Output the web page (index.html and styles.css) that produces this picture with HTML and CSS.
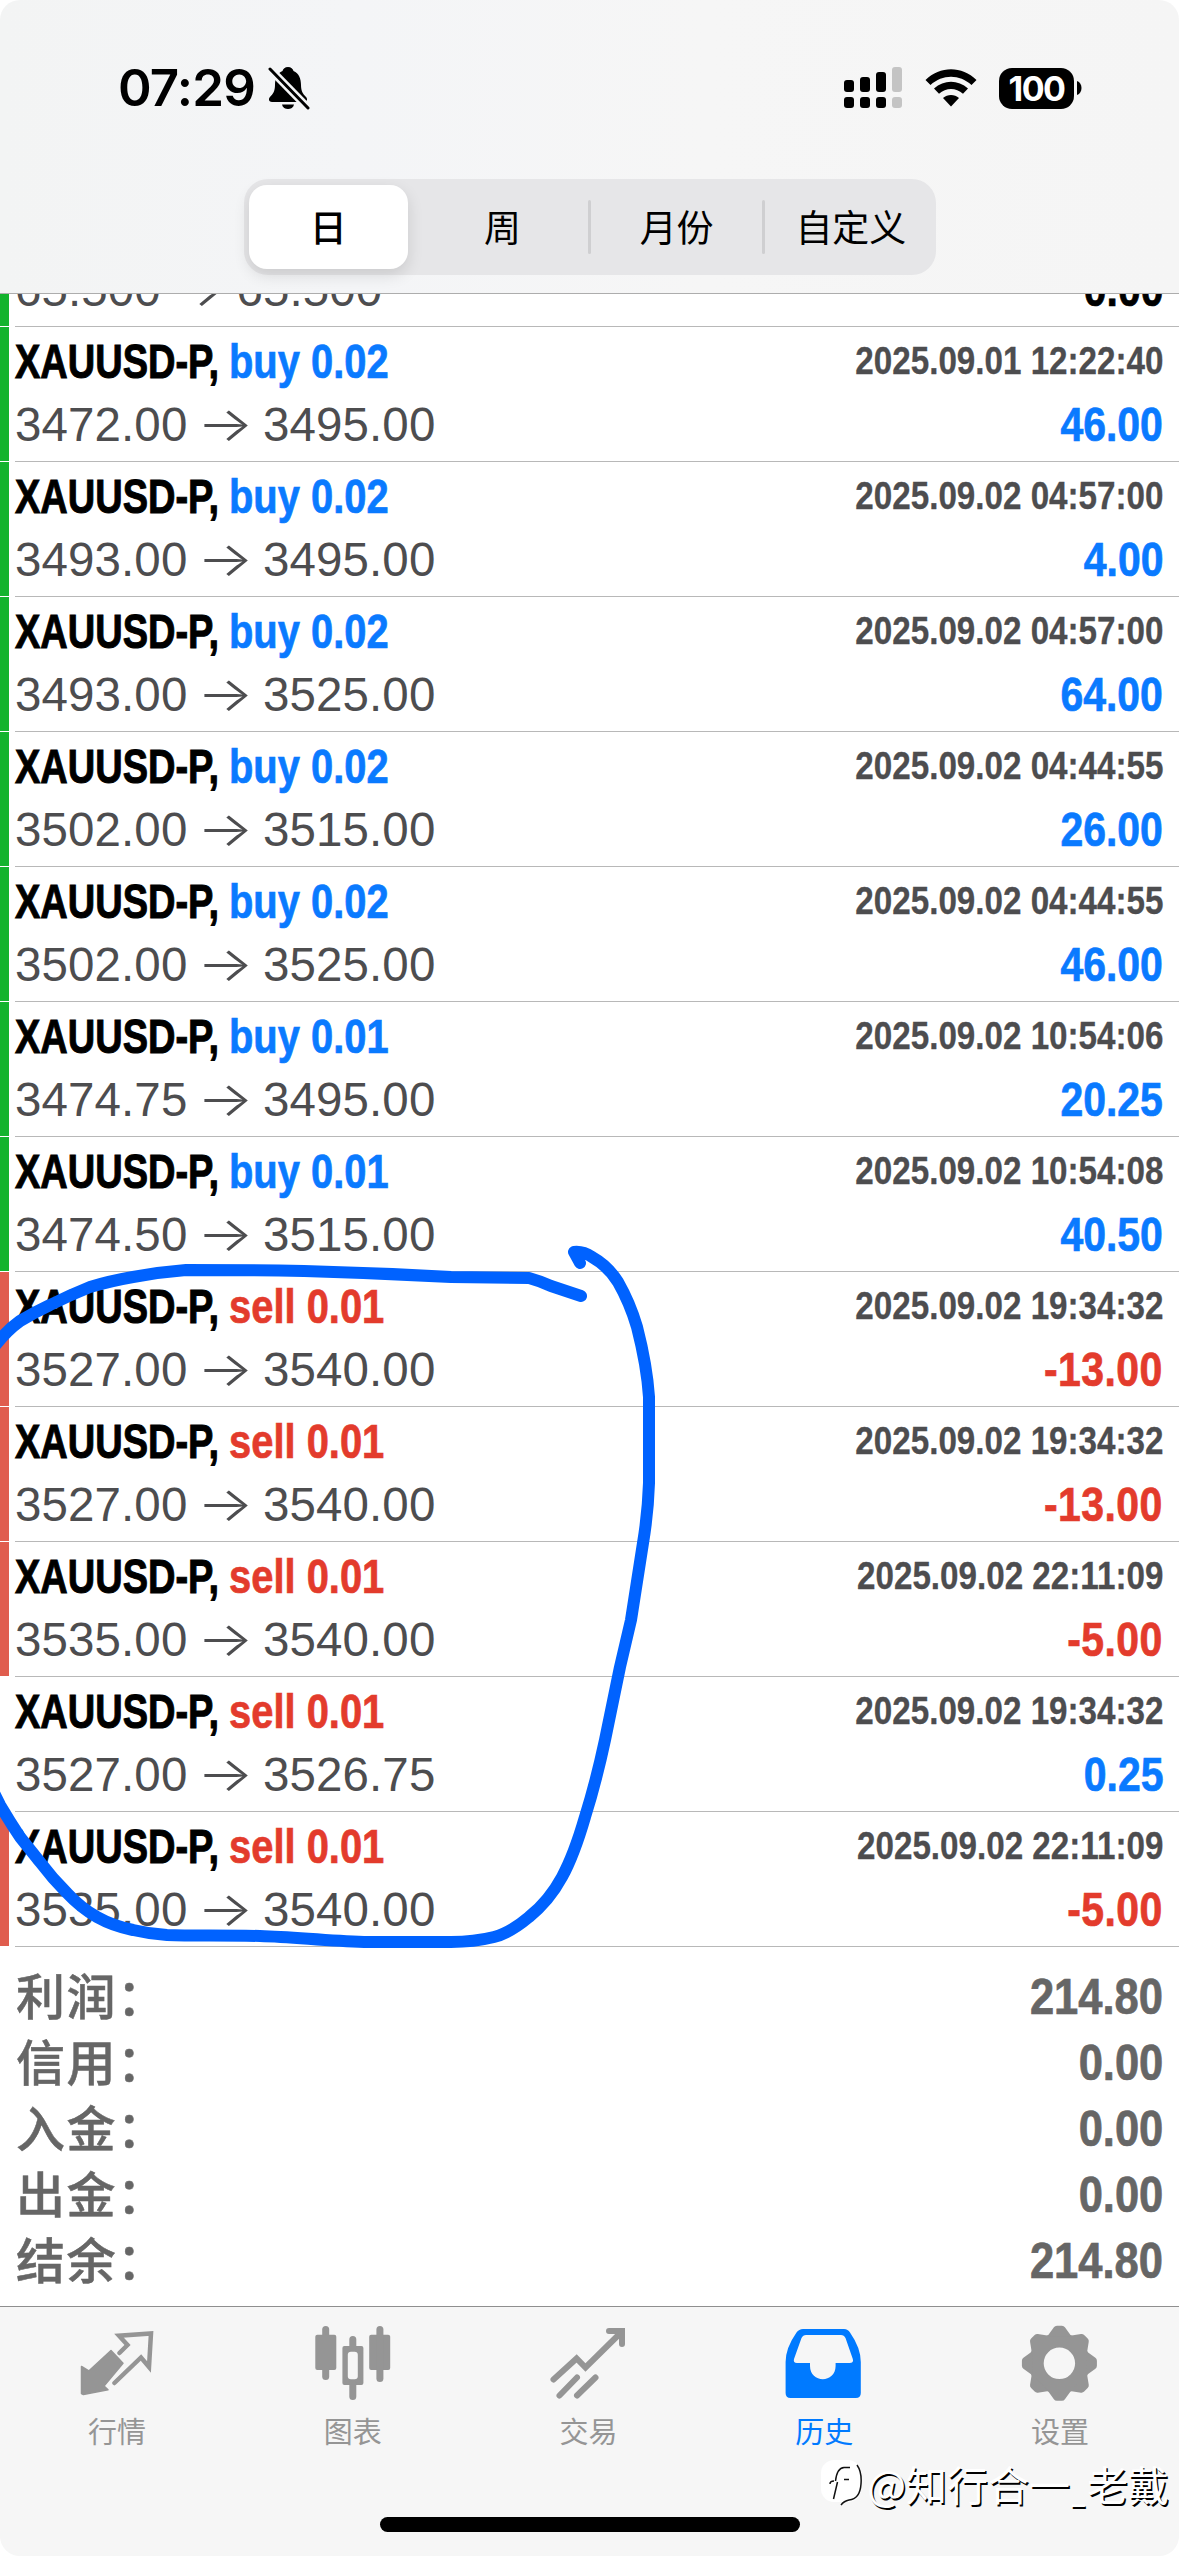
FILE: index.html
```html
<!DOCTYPE html>
<html lang="zh-CN">
<head>
    <meta charset="UTF-8">
    <meta name="viewport" content="width=device-width, initial-scale=1.0">
    <title>历史</title>
    <link rel="stylesheet" href="styles.css">
</head>
<body>
    <div class="screen">
        <header class="header">
            <div class="status-bar">
                <div class="status-left">
                    <span class="clock">07:29</span>
                    <svg class="bell" viewBox="0 0 42 44" width="42" height="44">
                        <path d="M20 1c-3 0-5 2-5.500 4C9 7 7 13 7 19c0 6-2 9-5 12-2 2-1 5 2 5h32c3 0 4-3 2-5-3-3-5-6-5-12 0-6-2-12-7.500-14C25 3 23 1 20 1z"/>
                        <path d="M14 38.500h12c-1 6-11 6-12 0z"/>
                        <path class="bell-gap" d="M2 3l38 39"/>
                        <path class="bell-slash" d="M2 3l38 39"/>
                    </svg>
                </div>
                <div class="status-right">
                    <svg viewBox="0 0 60 42" width="60" height="42">
                        <rect x="0" y="13" width="10" height="12" rx="3"/>
                        <rect x="16" y="10" width="10" height="15" rx="3"/>
                        <rect x="32" y="5" width="10" height="20" rx="3"/>
                        <rect class="dim" x="48" y="0" width="10" height="25" rx="3"/>
                        <rect x="0" y="30" width="10" height="11" rx="3"/>
                        <rect x="16" y="30" width="10" height="11" rx="3"/>
                        <rect x="32" y="30" width="10" height="11" rx="3"/>
                        <rect class="dim" x="48" y="30" width="10" height="11" rx="3"/>
                    </svg>
                    <svg class="wifi" viewBox="0 0 52 38" width="52" height="38">
                        <path d="M0.500 11C15-3.500 37-3.500 51.500 11L46.500 16C34.500 5 17.500 5 5.500 16z"/>
                        <path d="M9 19.500C19 10.500 33 10.500 43 19.500L38 24.800C31 18.500 21 18.500 14 24.800z"/>
                        <path d="M18 29C22.500 25 29.500 25 34 29L26 37.500z"/>
                    </svg>
                    <div class="battery"><span>100</span></div>
                    <svg class="battery-cap" viewBox="0 0 5 14" width="5" height="14"><path d="M0 0c6 2 6 12 0 14z"/></svg>
                </div>
            </div>
            <nav class="segments">
                <div class="segment active">日</div>
                <div class="segment">周</div>
                <div class="segment divided">月份</div>
                <div class="segment divided">自定义</div>
            </nav>
        </header>

        <main class="history">
            <div class="deal green">
                <div class="bar"></div>
                <div class="info">
                    <div class="line"></div>
                    <div class="line"><span class="price">65.500 <i>→</i> 65.500</span><span class="profit zero">0.00</span></div>
                </div>
            </div>
            <div class="deal green">
                <div class="bar"></div>
                <div class="info">
                    <div class="line"><span class="symbol">XAUUSD-P,</span><span class="side buy">buy 0.02</span><span class="date">2025.09.01 12:22:40</span></div>
                    <div class="line"><span class="price">3472.00 <i>→</i> 3495.00</span><span class="profit buy">46.00</span></div>
                </div>
            </div>
            <div class="deal green">
                <div class="bar"></div>
                <div class="info">
                    <div class="line"><span class="symbol">XAUUSD-P,</span><span class="side buy">buy 0.02</span><span class="date">2025.09.02 04:57:00</span></div>
                    <div class="line"><span class="price">3493.00 <i>→</i> 3495.00</span><span class="profit buy">4.00</span></div>
                </div>
            </div>
            <div class="deal green">
                <div class="bar"></div>
                <div class="info">
                    <div class="line"><span class="symbol">XAUUSD-P,</span><span class="side buy">buy 0.02</span><span class="date">2025.09.02 04:57:00</span></div>
                    <div class="line"><span class="price">3493.00 <i>→</i> 3525.00</span><span class="profit buy">64.00</span></div>
                </div>
            </div>
            <div class="deal green">
                <div class="bar"></div>
                <div class="info">
                    <div class="line"><span class="symbol">XAUUSD-P,</span><span class="side buy">buy 0.02</span><span class="date">2025.09.02 04:44:55</span></div>
                    <div class="line"><span class="price">3502.00 <i>→</i> 3515.00</span><span class="profit buy">26.00</span></div>
                </div>
            </div>
            <div class="deal green">
                <div class="bar"></div>
                <div class="info">
                    <div class="line"><span class="symbol">XAUUSD-P,</span><span class="side buy">buy 0.02</span><span class="date">2025.09.02 04:44:55</span></div>
                    <div class="line"><span class="price">3502.00 <i>→</i> 3525.00</span><span class="profit buy">46.00</span></div>
                </div>
            </div>
            <div class="deal green">
                <div class="bar"></div>
                <div class="info">
                    <div class="line"><span class="symbol">XAUUSD-P,</span><span class="side buy">buy 0.01</span><span class="date">2025.09.02 10:54:06</span></div>
                    <div class="line"><span class="price">3474.75 <i>→</i> 3495.00</span><span class="profit buy">20.25</span></div>
                </div>
            </div>
            <div class="deal green">
                <div class="bar"></div>
                <div class="info">
                    <div class="line"><span class="symbol">XAUUSD-P,</span><span class="side buy">buy 0.01</span><span class="date">2025.09.02 10:54:08</span></div>
                    <div class="line"><span class="price">3474.50 <i>→</i> 3515.00</span><span class="profit buy">40.50</span></div>
                </div>
            </div>
            <div class="deal red">
                <div class="bar"></div>
                <div class="info">
                    <div class="line"><span class="symbol">XAUUSD-P,</span><span class="side sell">sell 0.01</span><span class="date">2025.09.02 19:34:32</span></div>
                    <div class="line"><span class="price">3527.00 <i>→</i> 3540.00</span><span class="profit sell">-13.00</span></div>
                </div>
            </div>
            <div class="deal red">
                <div class="bar"></div>
                <div class="info">
                    <div class="line"><span class="symbol">XAUUSD-P,</span><span class="side sell">sell 0.01</span><span class="date">2025.09.02 19:34:32</span></div>
                    <div class="line"><span class="price">3527.00 <i>→</i> 3540.00</span><span class="profit sell">-13.00</span></div>
                </div>
            </div>
            <div class="deal red">
                <div class="bar"></div>
                <div class="info">
                    <div class="line"><span class="symbol">XAUUSD-P,</span><span class="side sell">sell 0.01</span><span class="date">2025.09.02 22:11:09</span></div>
                    <div class="line"><span class="price">3535.00 <i>→</i> 3540.00</span><span class="profit sell">-5.00</span></div>
                </div>
            </div>
            <div class="deal">
                <div class="bar"></div>
                <div class="info">
                    <div class="line"><span class="symbol">XAUUSD-P,</span><span class="side sell">sell 0.01</span><span class="date">2025.09.02 19:34:32</span></div>
                    <div class="line"><span class="price">3527.00 <i>→</i> 3526.75</span><span class="profit buy">0.25</span></div>
                </div>
            </div>
            <div class="deal red">
                <div class="bar"></div>
                <div class="info">
                    <div class="line"><span class="symbol">XAUUSD-P,</span><span class="side sell">sell 0.01</span><span class="date">2025.09.02 22:11:09</span></div>
                    <div class="line"><span class="price">3535.00 <i>→</i> 3540.00</span><span class="profit sell">-5.00</span></div>
                </div>
            </div>
        </main>

        <section class="summary">
            <div class="total"><span>利润：</span><b>214.80</b></div>
            <div class="total"><span>信用：</span><b>0.00</b></div>
            <div class="total"><span>入金：</span><b>0.00</b></div>
            <div class="total"><span>出金：</span><b>0.00</b></div>
            <div class="total"><span>结余：</span><b>214.80</b></div>
        </section>

        <footer class="footer">
            <nav class="tabs">
                <div class="tab">
                    <svg viewBox="0 0 84 84">
                        <path d="M35 29.500L47 42.300L28 65L32 68.700L7.400 73.500L5.500 72.500V45.500L12.800 50z" stroke="currentColor" stroke-width="1.500" stroke-linejoin="round"/>
                        <path class="stroke thin" d="M43.400 32L51.500 24L43 14.700L75 12.500L73 46L65 36.500L38.400 62"/>
                    </svg>
                    <span>行情</span>
                </div>
                <div class="tab">
                    <svg viewBox="0 0 84 84">
                        <rect x="3.300" y="13.700" width="21" height="35.300" rx="2"/>
                        <rect x="10.200" y="5" width="7" height="54" rx="3.500"/>
                        <path fill-rule="evenodd" d="M32.400 25h17q2 0 2 2v35q0 2-2 2h-17q-2 0-2-2V27q0-2 2-2zM39 30.700q-3.200 0-3.200 3v21.600q0 3 3.200 3h3.600q3.200 0 3.200-3V33.700q0-3-3.200-3z"/>
                        <path class="stroke wick" d="M40.800 18.500V26M40.800 63V75.500"/>
                        <rect x="57.200" y="13.700" width="21" height="35.300" rx="2"/>
                        <rect x="64.400" y="5" width="7" height="56" rx="3.500"/>
                    </svg>
                    <span>图表</span>
                </div>
                <div class="tab">
                    <svg viewBox="0 0 84 84">
                        <path class="stroke" d="M6.500 58.500L29.600 37.500L38.500 46.500L74.500 11"/>
                        <path class="stroke" d="M12.500 74.500L30 56.500M30 74.500L48.500 56.500"/>
                        <path d="M62 7h16v16q0 3-3 3t-3-3v-10h-10q-3 0-3-3t3-3z"/>
                    </svg>
                    <span>交易</span>
                </div>
                <div class="tab current">
                    <svg viewBox="0 0 84 84">
                        <path fill-rule="evenodd" d="M20 8H61Q65 8 67 11.500Q77.800 27 77.800 41V72Q77.800 77 72.800 77H7.600Q2.600 77 2.600 72V41Q2.600 27 13.500 11.500Q16 8 20 8zM23 14Q20 14 18.500 17L11 38Q10 42 14 42H27V45C27 62.500 52.600 62.500 52.600 45V42H66.500Q71 42 69.800 38L62.500 17Q61 14 58 14z"/>
                    </svg>
                    <span>历史</span>
                </div>
                <div class="tab">
                    <svg viewBox="0 0 84 84">
                        <g transform="translate(40.400 42.300)">
                            <circle class="ring" r="23"/>
                            <g id="teeth">
                                <path id="tooth" d="M-12-27L-5.500-36Q-4.500-37.500-2.500-37.500H2.500Q4.500-37.500 5.500-36L12-27z"/>
                                <use href="#tooth" transform="rotate(45)"/>
                                <use href="#tooth" transform="rotate(90)"/>
                                <use href="#tooth" transform="rotate(135)"/>
                            </g>
                            <use href="#teeth" transform="rotate(180)"/>
                        </g>
                    </svg>
                    <span>设置</span>
                </div>
            </nav>
            <div class="home-indicator"></div>
        </footer>

        <div class="watermark">
            <svg viewBox="0 0 42 50" width="42" height="50">
                <rect x="1" y="2" width="40" height="42" rx="13"/>
                <path d="M13.500 41L17.500 24M10 26q0-3 4-3M15.500 23Q17 10 24 9.500H30M24 21.500h5M37 7Q42 14 41 26Q40 41 29 42Q24 43 21 47"/>
            </svg>
            <span>@知行合一<em>_</em>老戴</span>
        </div>

        <!-- hand-drawn marker around the sell deals -->
        <svg class="marker" viewBox="0 0 1179 2556">
            <path d="M-6 1347Q6 1331 20 1321Q35 1312 50 1305Q70 1295 90 1287Q110 1281 133 1277Q160 1272 186 1270Q245 1270 304 1271Q378 1273 451 1277L529 1278Q540 1281 551 1286L581 1296"/>
            <path d="M580 1263L574 1252Q583 1251 592 1257Q608 1266 618 1282Q630 1303 637 1327Q647 1366 649 1397V1483Q648 1513 643 1543L631 1620L620 1667L605 1740Q596 1782 585 1817Q574 1855 562 1877Q549 1901 529 1917Q510 1933 494 1937Q474 1942 451 1942H364C325 1941 295 1937 260 1936C220 1935 195 1936 167 1935Q150 1934 133 1930Q113 1926 97 1917Q81 1908 67 1893Q52 1878 40 1862L20 1837Q10 1822 0 1805L-6 1793"/>
        </svg>
    </div>
</body>
</html>
```

FILE: styles.css
```css
* {
    box-sizing: border-box;
}

body {
    margin: 0;
    background: #fff;
    font-family: "Liberation Sans", "Noto Sans CJK SC", sans-serif;
}

.screen {
    position: relative;
    width: 1179px;
    height: 2556px;
    overflow: hidden;
    display: flex;
    flex-direction: column;
}

/* header */
.header {
    height: 294px;
    flex: none;
    background: linear-gradient(90deg, #f3f4f4, #f4f5f7 30%, #f6f6f6 60%, #f5f5f5);
    border-bottom: 1px solid #adadad;
    border-radius: 20px 20px 0 0;
    display: flex;
    flex-direction: column;
    align-items: center;
}

.status-bar {
    width: 100%;
    height: 179px;
    padding: 0 97px 0 118px;
    display: flex;
    justify-content: space-between;
    align-items: flex-start;
}

.status-left,
.status-right {
    display: flex;
    align-items: center;
    height: 42px;
    margin-top: 67px;
}

.clock {
    width: 150px;
    font-family: Inter, sans-serif;
    font-size: 51px;
    font-weight: 600;
    letter-spacing: -0.8px;
    line-height: 42px;
}

.bell-gap,
.bell-slash {
    fill: none;
    stroke: #f4f5f6;
    stroke-width: 8;
}

.bell-slash {
    stroke: #000;
    stroke-width: 3;
    stroke-linecap: round;
}

.dim {
    fill: #c4c4c4;
}

.wifi {
    margin: 0 22px 0 21px;
}

.battery {
    width: 75px;
    height: 41px;
    border-radius: 13px;
    background: #000;
    color: #fff;
    font-family: Inter, sans-serif;
    font-size: 34px;
    font-weight: 700;
    line-height: 42px;
    text-align: center;
}

.battery span {
    display: inline-block;
    margin: 0 -5px;
    letter-spacing: -1.5px;
}

.battery-cap {
    margin-left: 3px;
}

.segments {
    width: 692px;
    height: 96px;
    padding: 6px 5px;
    border-radius: 24px;
    background: #e6e6e8;
    display: flex;
    gap: 15px;
}

.segment {
    flex: 1;
    display: flex;
    align-items: center;
    justify-content: center;
    padding-bottom: 2px;
    font-family: "Noto Sans CJK SC", sans-serif;
    font-size: 37px;
    white-space: nowrap;
}

.segment.active {
    background: #fff;
    border-radius: 18px;
    font-weight: 500;
    box-shadow: 0 6px 16px rgba(0, 0, 0, 0.12);
}

.segment.divided {
    position: relative;
}

.segment.divided::before {
    content: "";
    position: absolute;
    left: -9px;
    top: 15px;
    width: 3px;
    height: 54px;
    border-radius: 2px;
    background: #cfcfd1;
}

/* deals */
.history {
    height: 1653px;
    flex: none;
    overflow: hidden;
    display: flex;
    flex-direction: column;
    justify-content: flex-end;
}

.deal {
    height: 135px;
    flex: none;
    display: flex;
}

.bar {
    width: 9px;
    margin-right: 6px;
    margin-bottom: 1px;
}

.green .bar {
    background: #13b32d;
}

.red .bar {
    background: #e05d4e;
}

.info {
    flex: 1;
    padding: 3px 16px 0 0;
    border-bottom: 1px solid #b8b8b8;
}

.line {
    height: 63px;
    line-height: 63px;
    display: flex;
    font-size: 47.5px;
    white-space: nowrap;
}

/* condensed faces are squeezed from the regular ones */
.symbol {
    width: 214px;
    font-weight: bold;
    transform: scaleX(0.8);
    transform-origin: left;
    -webkit-text-stroke: 1px;
}

.side {
    font-weight: bold;
    transform: scaleX(0.84);
    transform-origin: left;
    -webkit-text-stroke: 0.7px;
}

.date,
.profit {
    margin-left: auto;
    font-weight: bold;
    transform: scaleX(0.862);
    transform-origin: right;
    -webkit-text-stroke: 0.7px;
}

.date {
    font-size: 38.5px;
    line-height: 61px;
    color: #4d4d4f;
    -webkit-text-stroke: 0.3px;
}

.price {
    color: #4d4d4f;
    letter-spacing: 0.1px;
}

.price i {
    display: inline-block;
    width: 47px;
    margin: 0 1px;
    font-family: Inter, sans-serif;
    font-style: normal;
    font-weight: 300;
    line-height: 1;
    text-align: center;
    transform: scaleX(1.25);
}

.buy {
    color: #0a7aff;
}

.sell {
    color: #e33b2c;
}

.profit.sell {
    letter-spacing: 0.5px;
}

.zero {
    color: #000;
}

/* totals */
.summary {
    height: 359px;
    flex: none;
    padding: 17px 16px 0 16px;
    color: #666;
}

.total {
    height: 66px;
    line-height: 66px;
    display: flex;
    justify-content: space-between;
    font-size: 50px;
}

.total span {
    line-height: 60px;
    font-family: "Noto Sans CJK SC", sans-serif;
    font-size: 49px;
    font-weight: 500;
    letter-spacing: 1.5px;
    -webkit-text-stroke: 0.5px;
}

.total b {
    transform: scaleX(0.87);
    transform-origin: right;
    -webkit-text-stroke: 0.7px;
}

/* tab bar */
.footer {
    flex: 1;
    background: #f6f6f6;
    border-top: 1px solid #8f8f8f;
    border-radius: 0 0 20px 20px;
    display: flex;
    flex-direction: column;
    align-items: center;
}

.tabs {
    width: 100%;
    height: 210px;
    padding-top: 14px;
    display: flex;
}

.tab {
    flex: 1;
    display: flex;
    flex-direction: column;
    align-items: center;
    color: #959595;
    font-family: "Noto Sans CJK SC", sans-serif;
    font-size: 29px;
}

.tab svg {
    width: 84px;
    height: 84px;
    fill: currentColor;
}

.tab span {
    height: 50px;
    padding-right: 2px;
    line-height: 50px;
}

.tab .stroke {
    fill: none;
    stroke: currentColor;
    stroke-width: 6;
    stroke-linecap: round;
}

.tab .thin {
    stroke-width: 4.5;
}

.tab .wick {
    stroke-width: 7;
}

.ring {
    fill: none;
    stroke: currentColor;
    stroke-width: 14.6;
}

.current {
    color: #007aff;
}

.home-indicator {
    width: 420px;
    height: 15px;
    border-radius: 8px;
    background: #000;
}

.watermark {
    position: absolute;
    right: 10px;
    bottom: 43px;
    display: flex;
    align-items: center;
    gap: 5px;
    color: #fff;
    font-family: "Noto Sans CJK SC", sans-serif;
    font-size: 41px;
    line-height: 60px;
    text-shadow: 1.5px 1.5px 0 #000;
}

.watermark em {
    display: inline-block;
    font-style: normal;
    transform: scaleX(0.6);
    margin: 0 -3px;
}

.watermark svg {
    fill: #fff;
}

.watermark path {
    fill: none;
    stroke: #111;
    stroke-width: 1.5;
}

.marker {
    position: absolute;
    left: 0;
    top: 0;
    width: 1179px;
    height: 2556px;
    pointer-events: none;
    fill: none;
    stroke: #0062ff;
    stroke-width: 12;
    stroke-linecap: round;
    stroke-linejoin: round;
}
```
